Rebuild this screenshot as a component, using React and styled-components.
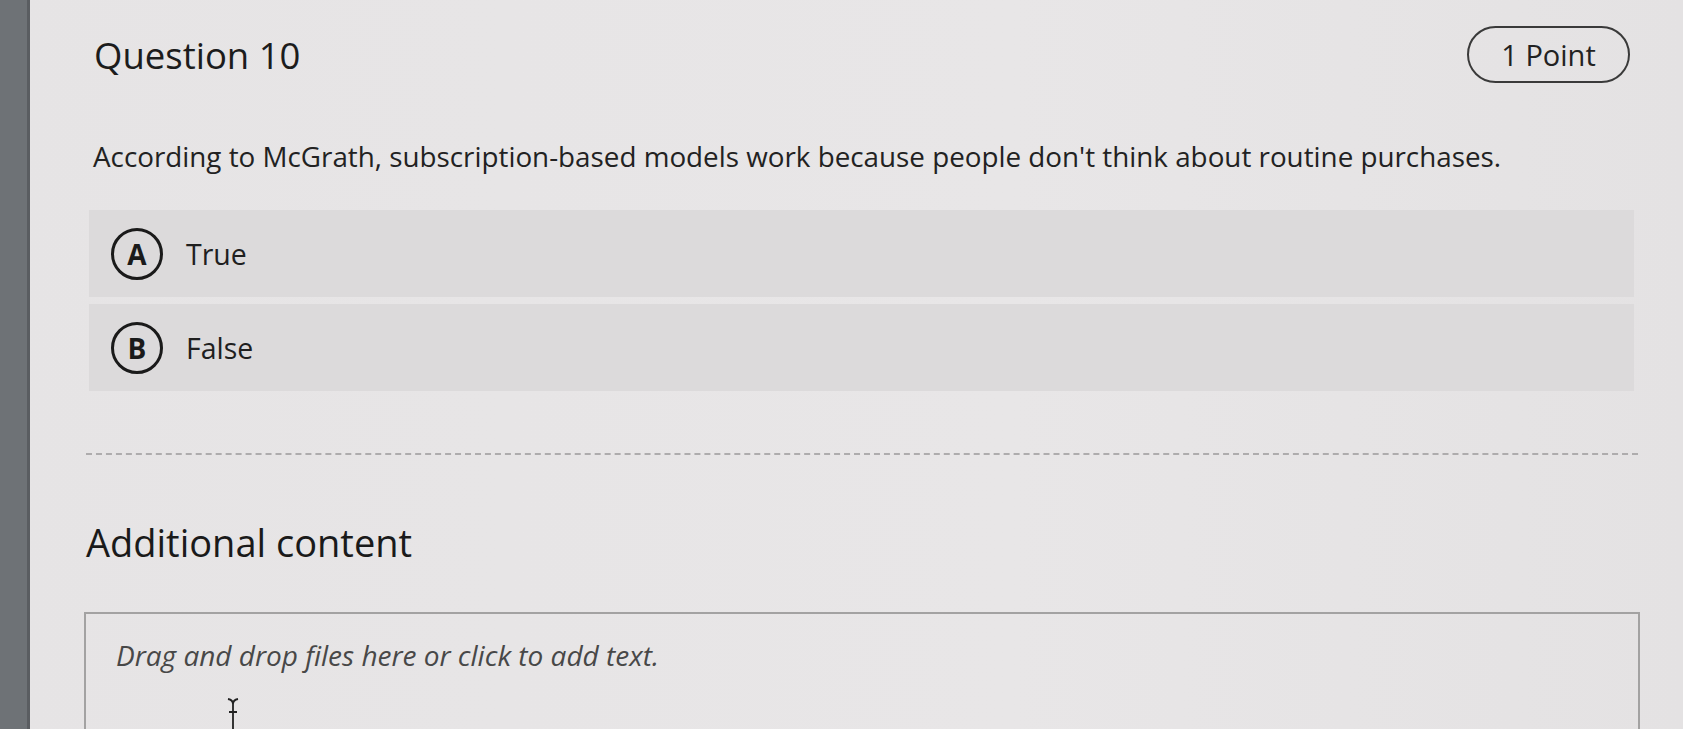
import styled, { createGlobalStyle } from 'styled-components';

const GlobalStyle = createGlobalStyle`
    html, body {
        margin: 0;
        padding: 0;
        background: #e5e3e4;
        font-family: "Open Sans", "Noto Sans", sans-serif;
        color: #1f1f1f;
        overflow: hidden;
    }
`;

const Page = styled.div`
    display: flex;
    flex-direction: row;
    width: 1683px;
    height: 729px;
    background: linear-gradient(90deg, #e6e4e5 0%, #e8e6e7 60%, #e4e2e3 100%);
`;

const Strip = styled.div`
    width: 27px;
    flex-shrink: 0;
    background: #6e7276;
    border-right: 3px solid #5a5d61;
`;

const Content = styled.div`
    flex: 1;
    padding: 26px 43px 0 56px;
    display: flex;
    flex-direction: column;
`;

const Header = styled.div`
    display: flex;
    justify-content: space-between;
    align-items: center;
    padding-left: 8px;
    padding-right: 10px;
`;

const Title = styled.h1`
    margin: 0;
    font-size: 36.5px;
    line-height: 50px;
    font-weight: 400;
    color: #1c1c1c;
`;

const PointBadge = styled.div`
    box-sizing: border-box;
    width: 163px;
    height: 57px;
    border: 2px solid #3a3a3a;
    border-radius: 29px;
    display: flex;
    align-items: center;
    justify-content: center;
    font-size: 29px;
    color: #222;
`;

const QuestionText = styled.p`
    margin: 54px 0 35px;
    padding-left: 7px;
    font-size: 27.8px;
    line-height: 38px;
    color: #222;
`;

const Options = styled.div`
    display: flex;
    flex-direction: column;
    gap: 7px;
    margin-left: 3px;
    margin-right: 6px;
`;

const OptionRow = styled.div`
    display: flex;
    align-items: center;
    gap: 23px;
    height: 87px;
    padding-left: 22px;
    background: #dcdadb;
`;

const Letter = styled.span`
    box-sizing: border-box;
    width: 52px;
    height: 52px;
    border: 3px solid #1a1a1a;
    border-radius: 50%;
    display: flex;
    align-items: center;
    justify-content: center;
    font-size: 28px;
    font-weight: 700;
    color: #1a1a1a;
`;

const OptionLabel = styled.span`
    font-size: 28.5px;
    color: #1f1f1f;
`;

const Divider = styled.hr`
    margin: 62px 2px 0 0;
    border: none;
    border-top: 2px dashed #aeacad;
`;

const SectionTitle = styled.h2`
    margin: 61px 0 44px;
    font-size: 38px;
    line-height: 52px;
    font-weight: 400;
    color: #1a1a1a;
`;

const DropBox = styled.div`
    position: relative;
    flex: 1;
    margin-left: -2px;
    border: 2px solid #a3a2a2;
    border-bottom: none;
    padding: 22px 30px 0;
`;

const Placeholder = styled.p`
    margin: 0;
    font-size: 28px;
    line-height: 38px;
    font-style: italic;
    color: #484848;
`;

const Cursor = styled.svg`
    position: absolute;
    left: 140px;
    top: 84px;
`;

export default function App() {
    return (
        <>
            <GlobalStyle />
            <Page>
                <Strip />
                <Content>
                    <Header>
                        <Title>Question 10</Title>
                        <PointBadge>1 Point</PointBadge>
                    </Header>
                    <QuestionText>
                        According to McGrath, subscription-based models work because people don't think about routine purchases.
                    </QuestionText>
                    <Options>
                        <OptionRow>
                            <Letter>A</Letter>
                            <OptionLabel>True</OptionLabel>
                        </OptionRow>
                        <OptionRow>
                            <Letter>B</Letter>
                            <OptionLabel>False</OptionLabel>
                        </OptionRow>
                    </Options>
                    <Divider />
                    <SectionTitle>Additional content</SectionTitle>
                    <DropBox>
                        <Placeholder>Drag and drop files here or click to add text.</Placeholder>
                        <Cursor width="14" height="34" viewBox="0 0 14 34">
                            <path d="M2 1 Q7 2 7 6 Q7 2 12 1 M7 6 V34 M3 14 H11" stroke="#222" strokeWidth="1.8" fill="none" />
                        </Cursor>
                    </DropBox>
                </Content>
            </Page>
        </>
    );
}
